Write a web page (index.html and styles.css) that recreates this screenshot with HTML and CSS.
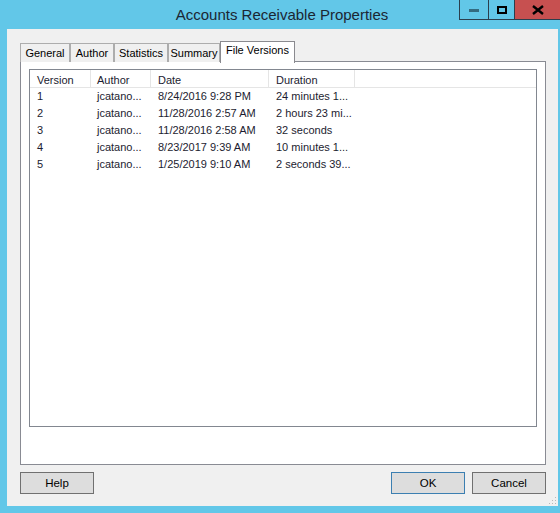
FILE: index.html
```html
<!DOCTYPE html>
<html>
<head>
<meta charset="utf-8">
<link rel="stylesheet" href="styles.css">
</head>
<body>
<div class="frame">
  <div class="titlebar">
    <div class="title">Accounts Receivable Properties</div>
    <div class="caption-btns">
      <div class="cbtn min"><span class="min-bar"></span></div>
      <div class="cbtn max"><span class="max-box"></span></div>
      <div class="cbtn close">
        <svg width="14" height="10" viewBox="0 0 14 10"><path d="M2 1 L12 9 M12 1 L2 9" stroke="#000" stroke-width="2.4" fill="none"/></svg>
      </div>
    </div>
  </div>
  <div class="client">
    <div class="tabs">
      <div class="tab t-general">General</div>
      <div class="tab t-author">Author</div>
      <div class="tab t-stats">Statistics</div>
      <div class="tab t-summary">Summary</div>
      <div class="tab active t-fv">File Versions</div>
    </div>
    <div class="panel">
      <div class="list">
        <div class="row header">
          <div class="c c1">Version</div>
          <div class="c c2">Author</div>
          <div class="c c3">Date</div>
          <div class="c c4">Duration</div>
          <div class="c c5"></div>
        </div>
        <div class="row"><div class="c c1">1</div><div class="c c2">jcatano...</div><div class="c c3">8/24/2016 9:28 PM</div><div class="c c4">24 minutes 1...</div></div>
        <div class="row"><div class="c c1">2</div><div class="c c2">jcatano...</div><div class="c c3">11/28/2016 2:57 AM</div><div class="c c4">2 hours 23 mi...</div></div>
        <div class="row"><div class="c c1">3</div><div class="c c2">jcatano...</div><div class="c c3">11/28/2016 2:58 AM</div><div class="c c4">32 seconds</div></div>
        <div class="row"><div class="c c1">4</div><div class="c c2">jcatano...</div><div class="c c3">8/23/2017 9:39 AM</div><div class="c c4">10 minutes 1...</div></div>
        <div class="row"><div class="c c1">5</div><div class="c c2">jcatano...</div><div class="c c3">1/25/2019 9:10 AM</div><div class="c c4">2 seconds 39...</div></div>
      </div>
    </div>
    <div class="buttons">
      <div class="btn">Help</div>
      <div class="spacer"></div>
      <div class="btn default">OK</div>
      <div class="btn">Cancel</div>
    </div>
    <div class="grip">
      <svg width="8" height="8" viewBox="0 0 8 8" fill="#b8b8b8"><rect x="6" y="0" width="1" height="1"/><rect x="3" y="3" width="1" height="1"/><rect x="6" y="3" width="1" height="1"/><rect x="0" y="6" width="1" height="1"/><rect x="3" y="6" width="1" height="1"/><rect x="6" y="6" width="1" height="1"/></svg>
    </div>
  </div>
</div>
</body>
</html>
```
FILE: styles.css
```css
* { box-sizing: border-box; }
html, body { margin: 0; padding: 0; }
body {
  background: #62c7e8;
  width: 560px;
  height: 513px;
  overflow: hidden;
  font-family: "Liberation Sans", Arial, sans-serif;
  font-size: 11px;
  color: #000;
}
.frame { position: relative; width: 560px; height: 513px; }
.titlebar {
  height: 29px;
  display: flex;
  justify-content: center;
  align-items: flex-start;
}
.title {
  font-size: 15px;
  color: #1b2633;
  margin-top: 6px;
  margin-left: 4px;
}
.caption-btns {
  position: absolute;
  top: 0;
  left: 459px;
  display: flex;
  height: 20px;
}
.cbtn {
  height: 20px;
  display: flex;
  align-items: center;
  justify-content: center;
  border-bottom: 1px solid #2b3f4e;
  border-left: 1px solid #2b3f4e;
}
.cbtn.min { width: 29px; }
.cbtn.max { width: 26px; }
.cbtn.close { width: 47px; background: #c75050; border-right: 1px solid #2b3f4e; }
.min-bar { width: 10px; height: 3px; background: #336b80; margin-top: 2px; }
.max-box { width: 10px; height: 8px; border: 2px solid #000; }
.client {
  position: relative;
  margin-left: 7px;
  width: 551px;
  height: 477px;
  background: #f0f0f0;
  padding: 12px 0 0 13px;
}
.tabs {
  display: flex;
  align-items: flex-end;
  height: 21px;
  position: relative;
  z-index: 2;
}
.tab {
  height: 19px;
  border: 1px solid #adadad;
  border-bottom: none;
  background: #f0f0f0;
  padding-top: 3px;
  text-align: center;
  color: #000;
  white-space: nowrap;
}
.t-general { width: 50px; }
.t-author { width: 44px; }
.t-stats { width: 54px; }
.t-summary { width: 52px; }
.tab.active {
  width: 75px;
  height: 22px;
  background: #fff;
  border-color: #8a8a8f;
  margin-bottom: -1px;
  padding-top: 2px;
}
.panel {
  width: 526px;
  height: 404px;
  border: 1px solid #898b93;
  background: #fff;
  margin-top: -1px;
  padding: 7px 0 0 8px;
  position: relative;
  z-index: 1;
}
.list {
  width: 508px;
  height: 358px;
  border: 1px solid #828790;
  background: #fff;
}
.row {
  display: flex;
  height: 17px;
  line-height: 17px;
  color: #1c1c30;
  white-space: nowrap;
}
.row.header {
  height: 18px;
  line-height: 14px;
  padding-top: 3px;
  border-bottom: 1px solid #e5e5e5;
  background: #fff;
}
.header .c { margin-top: -3px; padding-top: 3px; height: 17px; }
.c { padding-left: 7px; overflow: hidden; }
.row .c2 { padding-left: 6px; }
.c1 { width: 61px; }
.c2 { width: 60px; }
.c3 { width: 118px; }
.c4 { width: 86px; }
.header .c { border-right: 1px solid #e5e5e5; }
.header .c5 { border-right: none; flex: 1; }
.buttons {
  display: flex;
  margin-top: 7px;
  width: 526px;
  height: 22px;
}
.spacer { flex: 1; }
.btn {
  width: 74px;
  height: 22px;
  border: 1px solid #707070;
  background: #dddddd;
  text-align: center;
  line-height: 20px;
  color: #000;
  font-size: 11.5px;
}
.btn.default { border-color: #3c7fb1; margin-right: 7px; }
.grip {
  position: absolute;
  right: 1px;
  bottom: 1px;
  width: 8px;
  height: 8px;
  display: flex;
}
```
